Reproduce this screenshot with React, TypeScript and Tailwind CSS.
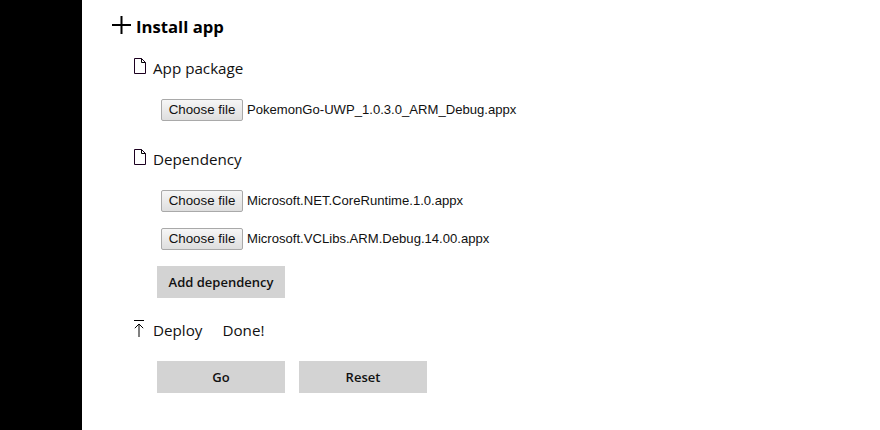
const FileIcon = () => (
  <svg width="12" height="16" viewBox="0 0 12 16" fill="none" strokeWidth="1" className="shrink-0">
    <path d="M0.5 0.5H7.5L11.5 4.5V15.5H0.5Z" stroke="#1c0020" />
    <path d="M7.5 0.5V4.5H11.5" stroke="#000" />
  </svg>
);

const UpIcon = () => (
  <svg width="10" height="17" viewBox="0 0 10 17" fill="none" stroke="#000" strokeWidth="1" className="shrink-0">
    <path d="M0 0.5H10" />
    <path d="M5 17V4M0.8 8.2L5 4L9.2 8.2" />
  </svg>
);

const PlusIcon = () => (
  <svg width="19" height="19" viewBox="0 0 19 19" fill="none" stroke="#000" strokeWidth="2" className="shrink-0 self-start mt-px">
    <path d="M0 9H19M9.5 0V18" />
  </svg>
);

const FileRow = ({ name, className }: { name: string; className: string }) => (
  <div className={`flex items-center h-[22px] pl-[79px] font-['Liberation_Sans',sans-serif] ${className}`}>
    <span className="h-[22px] w-[82px] flex items-center justify-center rounded-[2px] border border-[#a9a9a9] bg-[linear-gradient(#f6f6f6,#dedede)] text-[#111] text-[13.33px]">
      Choose file
    </span>
    <span className="ml-1 text-[#111] text-[13.1px]">{name}</span>
  </div>
);

const Heading = ({ icon, label, className, extra }: { icon: React.ReactNode; label: string; className: string; extra?: string }) => (
  <div className={`flex items-center h-[22px] pl-[52px] text-[15.2px] text-[#111] ${className}`}>
    <span className="w-[19px] flex self-start mt-px">{icon}</span>
    <span>{label}</span>
    {extra && <span className="ml-[20px]">{extra}</span>}
  </div>
);

const Btn = ({ children }: { children: React.ReactNode }) => (
  <button className="h-8 w-32 bg-[#d3d3d3] pt-px text-[13px] font-semibold text-[#111]">{children}</button>
);

export default function App() {
  return (
    <div className="flex h-[430px] w-[880px] overflow-hidden bg-white font-['Open_Sans','Noto_Sans',sans-serif]">
      <div className="w-[82px] shrink-0 bg-black" />
      <main className="flex-1 flex flex-col">
        <div className="flex items-center gap-[5px] h-[24px] mt-[15px] pl-[30px]">
          <PlusIcon />
          <span className="text-[16.7px] font-bold text-black">Install app</span>
        </div>
        <Heading icon={<FileIcon />} label="App package" className="mt-[18px]" />
        <FileRow name="PokemonGo-UWP_1.0.3.0_ARM_Debug.appx" className="mt-[20px]" />
        <Heading icon={<FileIcon />} label="Dependency" className="mt-[27px]" />
        <FileRow name="Microsoft.NET.CoreRuntime.1.0.appx" className="mt-[20px]" />
        <FileRow name="Microsoft.VCLibs.ARM.Debug.14.00.appx" className="mt-[16px]" />
        <div className="flex mt-[16px] pl-[75px]"><Btn>Add dependency</Btn></div>
        <Heading icon={<UpIcon />} label="Deploy" extra="Done!" className="mt-[21px]" />
        <div className="flex gap-[14px] mt-[20px] pl-[75px]">
          <Btn>Go</Btn>
          <Btn>Reset</Btn>
        </div>
      </main>
    </div>
  );
}
